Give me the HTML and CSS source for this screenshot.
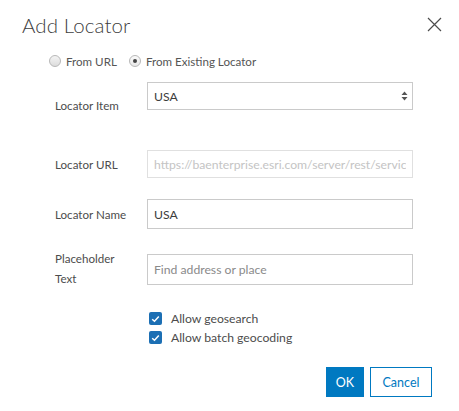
FILE: index.html
```html
<!DOCTYPE html>
<html>
<head>
<meta charset="utf-8">
<link rel="stylesheet" href="styles.css">
</head>
<body>
<div class="dialog">
  <div class="header">
    <h1 class="title">Add Locator</h1>
    <span class="close">
      <svg width="15" height="15" viewBox="0 0 15 15"><path d="M1 1 L14 14 M14 1 L1 14" stroke="#4c4c4c" stroke-width="1.2" fill="none"/></svg>
    </span>
  </div>
  <div class="radios">
    <label class="radio"><span class="radio-dot"></span>From URL</label>
    <label class="radio"><span class="radio-dot checked"></span>From Existing Locator</label>
  </div>
  <div class="form">
    <div class="row row-item">
      <div class="lbl lbl-item">Locator Item</div>
      <div class="select">USA<span class="arrows"><svg width="7" height="10" viewBox="0 0 7 10"><path d="M3.5 0.5 L6.5 4 L0.5 4 Z M0.5 6 L6.5 6 L3.5 9.5 Z" fill="#555"/></svg></span></div>
    </div>
    <div class="row row-url">
      <div class="lbl">Locator URL</div>
      <div class="input disabled"><span class="clip">https://baenterprise.esri.com/server/rest/servic</span></div>
    </div>
    <div class="row row-name">
      <div class="lbl">Locator Name</div>
      <div class="input">USA</div>
    </div>
    <div class="row row-ph">
      <div class="lbl lbl-ph">Placeholder<br>Text</div>
      <div class="input placeholder">Find address or place</div>
    </div>
  </div>
  <div class="checks">
    <label class="check"><span class="box"><svg width="9" height="8" viewBox="0 0 9 8"><path d="M1.2 4.2 L3.5 6.3 L7.8 1.6" stroke="#fff" stroke-width="1.5" fill="none"/></svg></span>Allow geosearch</label>
    <label class="check"><span class="box"><svg width="9" height="8" viewBox="0 0 9 8"><path d="M1.2 4.2 L3.5 6.3 L7.8 1.6" stroke="#fff" stroke-width="1.5" fill="none"/></svg></span>Allow batch geocoding</label>
  </div>
  <div class="buttons">
    <button class="btn btn-ok">OK</button>
    <button class="btn btn-cancel">Cancel</button>
  </div>
</div>
</body>
</html>
```
FILE: styles.css
```css
html, body {
  margin: 0;
  padding: 0;
  background: #fff;
}
body {
  font-family: Lato, "Open Sans", sans-serif;
  color: #4c4c4c;
  width: 459px;
  height: 411px;
  overflow: hidden;
}
.dialog {
  padding: 0 17px 0 22px;
}
.header {
  display: flex;
  justify-content: space-between;
  align-items: center;
  height: 50px;
}
.title {
  margin: 0;
  font-size: 20.5px;
  font-weight: 300;
  color: #404040;
  letter-spacing: 0.1px;
}
.close {
  display: flex;
  width: 15px;
  height: 15px;
  margin-top: -2px;
}
.radios {
  display: flex;
  gap: 12px;
  margin-left: 27px;
  height: 22px;
  align-items: center;
}
.radio {
  display: flex;
  align-items: center;
  gap: 5px;
  font-size: 11.6px;
  color: #555;
}
.radio-dot {
  width: 10px;
  height: 10px;
  border-radius: 50%;
  border: 1px solid #b8b8b8;
  background: linear-gradient(#f4f4f4, #dcdcdc);
  position: relative;
}
.radio-dot.checked {
  background: linear-gradient(#fafafa, #e8e8e8);
}
.radio-dot.checked::after {
  content: "";
  position: absolute;
  left: 3px;
  top: 3px;
  width: 4px;
  height: 4px;
  border-radius: 50%;
  background: #444;
}
.form {
  margin-left: 33px;
  margin-top: 10px;
}
.row {
  display: grid;
  grid-template-columns: 92px 266px;
  align-items: center;
}
.lbl {
  font-size: 11.6px;
  color: #4c4c4c;
}
.row-item {
  align-items: start;
  height: 68px;
}
.lbl-item {
  padding-top: 17px;
}
.row-url {
  height: 28px;
}
.row-name {
  margin-top: 21px;
  height: 30px;
}
.row-ph {
  margin-top: 20px;
}
.lbl-ph {
  line-height: 20px;
}
.select, .input {
  box-sizing: border-box;
  border: 1px solid #cacaca;
  height: 100%;
  display: flex;
  align-items: center;
  padding: 0 6px;
  font-size: 12.2px;
  color: #3c3c3c;
  white-space: nowrap;
  overflow: hidden;
  background: #fff;
}
.row-ph .input {
  height: 31px;
}
.select {
  height: 28px;
  justify-content: space-between;
  padding-right: 4px;
}
.arrows {
  display: flex;
}
.input.disabled {
  color: #c4c4c4;
  border-color: #e0e0e0;
}
.clip {
  display: block;
  overflow: hidden;
  max-width: 100%;
}
.input.placeholder {
  color: #8a8a8a;
}
.checks {
  margin-left: 127px;
  margin-top: 23px;
  display: flex;
  flex-direction: column;
  gap: 6px;
}
.check {
  display: flex;
  align-items: center;
  gap: 9px;
  font-size: 12.2px;
  color: #4c4c4c;
  height: 13px;
}
.box {
  width: 13px;
  height: 13px;
  border-radius: 2px;
  background: #1c6fb4;
  display: flex;
  align-items: center;
  justify-content: center;
}
.buttons {
  display: flex;
  justify-content: flex-end;
  gap: 6px;
  margin-top: 23px;
  margin-right: 10px;
}
.btn {
  font-family: Lato, "Open Sans", sans-serif;
  font-size: 12.5px;
  height: 30px;
  box-sizing: border-box;
  border: 1px solid #0079c1;
  padding: 0;
  cursor: pointer;
}
.btn-ok {
  width: 38px;
  background: #0079c1;
  color: #fff;
}
.btn-cancel {
  width: 62px;
  background: #fff;
  color: #0079c1;
}
```
